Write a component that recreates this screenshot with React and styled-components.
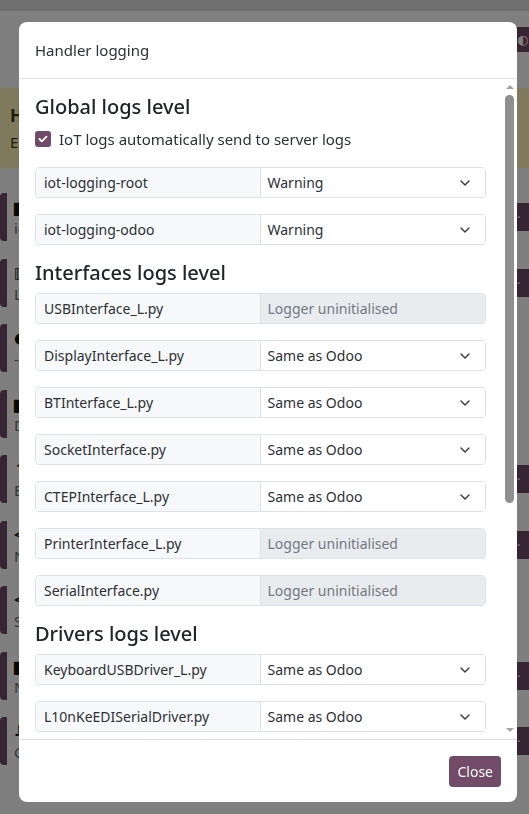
import React from "react";
import styled, { createGlobalStyle } from "styled-components";

const GlobalStyle = createGlobalStyle`
  html, body {
    margin: 0;
    padding: 0;
    height: 100%;
    overflow: hidden;
  }
  body {
    font-family: "Noto Sans", "DejaVu Sans", sans-serif;
    color: #374151;
    background: #ffffff;
  }
`;

/* ---------- page behind the dialog ---------- */

const Page = styled.div`
  display: flex;
  flex-direction: column;
  height: 814px;
`;

const TopBar = styled.div`
  height: 11px;
  background: #dedede;
`;

const PageHead = styled.div`
  height: 77px;
  display: flex;
  justify-content: flex-end;
  align-items: flex-start;
  padding-top: 16px;
  box-sizing: border-box;
`;

const Alert = styled.div`
  height: 80px;
  background: #fff5bd;
  padding: 15px 10px;
  box-sizing: border-box;
  color: #3f3308;
  font-size: 15px;
  line-height: 26px;
`;

const AlertTitle = styled.div`
  font-weight: 700;
  font-size: 17px;
`;

const CardList = styled.div`
  display: flex;
  flex-direction: column;
  gap: 17.5px;
  padding-top: 25px;
`;

const Card = styled.div`
  display: flex;
  align-items: center;
  justify-content: space-between;
  height: 48px;
  border-left: 7px solid #714b67;
  border-radius: 4px;
  padding-left: 7px;
  font-size: 15px;
`;

const CardText = styled.div`
  display: flex;
  flex-direction: column;
  line-height: 22px;
  color: #6b6b6b;
`;

const CardIcon = styled.span`
  color: #111;
  font-weight: 700;
`;

const PurpleButton = styled.div`
  width: 12px;
  height: ${(p) => p.$h || 28}px;
  background: #714b67;
  border-radius: 5px 0 0 5px;
  color: #fff;
  font-size: 13px;
  line-height: ${(p) => p.$h || 28}px;
  padding-left: 4px;
  overflow: hidden;
`;

/* ---------- dialog ---------- */

const Backdrop = styled.div`
  position: fixed;
  inset: 0;
  background: rgba(0, 0, 0, 0.5);
  display: flex;
  align-items: flex-start;
  padding: 22px 0 0 19px;
`;

const Modal = styled.div`
  width: 498px;
  height: 780px;
  background: #fff;
  border-radius: 8px;
  display: flex;
  flex-direction: column;
  overflow: hidden;
`;

const Header = styled.div`
  padding: 16px;
  border-bottom: 1px solid #dee2e6;
  flex-shrink: 0;
`;

const Title = styled.h4`
  margin: 0;
  font-size: 15px;
  font-weight: 400;
  line-height: 24px;
  color: #2d3035;
`;

const BodyWrap = styled.div`
  flex: 1;
  display: flex;
  min-height: 0;
`;

const Body = styled.div`
  flex: 1;
  overflow: hidden;
  padding: 16px 16px 0;
`;

const ScrollBar = styled.div`
  width: 15px;
  flex-shrink: 0;
  display: flex;
  flex-direction: column;
  background: #fff;
`;

const Arrow = styled.div`
  height: 15px;
  display: flex;
  justify-content: center;
  align-items: ${(p) => (p.$down ? "flex-start" : "flex-end")};
  padding: ${(p) => (p.$down ? "4px 0 0" : "0 0 5px")};
  box-sizing: border-box;
  &::before {
    content: "";
    width: 0;
    height: 0;
    border-left: 4px solid transparent;
    border-right: 4px solid transparent;
    ${(p) =>
      p.$down ? "border-top: 4px solid #a3a3a3;" : "border-bottom: 4px solid #a3a3a3;"}
  }
`;

const Track = styled.div`
  flex: 1;
  padding: 1px 3px;
`;

const Thumb = styled.div`
  height: 408px;
  border-radius: 5px;
  background: #8f8f8f;
`;

const SectionTitle = styled.h3`
  margin: 0 0 8px;
  font-size: 20px;
  font-weight: 500;
  line-height: 24px;
  color: #212529;
`;

const CheckRow = styled.label`
  display: flex;
  align-items: center;
  gap: 8px;
  font-size: 15px;
  line-height: 24px;
  color: #2d3035;
  margin-bottom: 16px;
`;

const CheckBox = styled.span`
  width: 16px;
  height: 16px;
  border-radius: 3px;
  background: #714b67;
  display: flex;
  align-items: center;
  justify-content: center;
`;

const Row = styled.div`
  display: grid;
  grid-template-columns: 1fr 1fr;
  height: 31px;
  margin-bottom: 16px;
  border: 1px solid #dee2e6;
  border-radius: 4px;
  box-sizing: border-box;
  font-size: 14px;
  overflow: hidden;
`;

const RowLabel = styled.div`
  background: #f7f8fa;
  border-right: 1px solid #dee2e6;
  padding: 0 8px;
  display: flex;
  align-items: center;
  color: #2d3035;
`;

const Select = styled.div`
  display: flex;
  align-items: center;
  justify-content: space-between;
  padding: 0 15px 0 7px;
  background: ${(p) => (p.$disabled ? "#e9ecef" : "#fff")};
  color: ${(p) => (p.$disabled ? "#73787e" : "#2d3035")};
`;

const Footer = styled.div`
  flex-shrink: 0;
  border-top: 1px solid #dee2e6;
  display: flex;
  justify-content: flex-end;
  padding: 16px 16px 15px;
`;

const CloseButton = styled.button`
  height: 31px;
  padding: 0 8px;
  border: none;
  border-radius: 4px;
  background: #714b67;
  color: #fff;
  font-family: inherit;
  font-size: 14px;
  cursor: pointer;
`;

const Chevron = () => (
  <svg width="10" height="6" viewBox="0 0 10 6">
    <path d="M1 1l4 4 4-4" fill="none" stroke="#343a40" strokeWidth="1.4" strokeLinecap="round" strokeLinejoin="round" />
  </svg>
);

const LevelRow = ({ name, value }) => (
  <Row>
    <RowLabel>{name}</RowLabel>
    {value ? (
      <Select>
        {value}
        <Chevron />
      </Select>
    ) : (
      <Select $disabled>Logger uninitialised</Select>
    )}
  </Row>
);

const interfaces = [
  ["USBInterface_L.py", null],
  ["DisplayInterface_L.py", "Same as Odoo"],
  ["BTInterface_L.py", "Same as Odoo"],
  ["SocketInterface.py", "Same as Odoo"],
  ["CTEPInterface_L.py", "Same as Odoo"],
  ["PrinterInterface_L.py", null],
  ["SerialInterface.py", null],
];

const drivers = [
  ["KeyboardUSBDriver_L.py", "Same as Odoo"],
  ["L10nKeEDISerialDriver.py", "Same as Odoo"],
  ["PrinterDriver_L.py", "Same as Odoo"],
];

const cards = [
  { icon: "▆", text: "iot-box", button: true },
  { icon: "▥", text: "Linux", button: true },
  { icon: "●", text: "-", button: false },
  { icon: "▆", text: "Display", button: false },
  { icon: "↑", text: "Enabled", button: true },
  { icon: "<", text: "Network", button: true },
  { icon: "<", text: "Server", button: false },
  { icon: "▆", text: "Name", button: true },
  { icon: "♪", text: "Connected", button: true },
];

const App = () => {
  return (
    <>
      <GlobalStyle />
      <Page>
        <TopBar />
        <PageHead>
          <PurpleButton $h={25}>◐</PurpleButton>
        </PageHead>
        <Alert>
          <AlertTitle>Handler logging</AlertTitle>
          <div>Enable logs</div>
        </Alert>
        <CardList>
          {cards.map((c, i) => (
            <Card key={i}>
              <CardText>
                <CardIcon>{c.icon}</CardIcon>
                <span>{c.text}</span>
              </CardText>
              {c.button && <PurpleButton>·</PurpleButton>}
            </Card>
          ))}
        </CardList>
      </Page>

      <Backdrop>
        <Modal>
          <Header>
            <Title>Handler logging</Title>
          </Header>
          <BodyWrap>
            <Body>
              <SectionTitle>Global logs level</SectionTitle>
              <CheckRow>
                <CheckBox>
                  <svg width="10" height="8" viewBox="0 0 10 8">
                    <path d="M1.5 4l2.3 2.3L8.5 1.6" fill="none" stroke="#fff" strokeWidth="1.8" strokeLinecap="round" strokeLinejoin="round" />
                  </svg>
                </CheckBox>
                IoT logs automatically send to server logs
              </CheckRow>
              <LevelRow name="iot-logging-root" value="Warning" />
              <LevelRow name="iot-logging-odoo" value="Warning" />

              <SectionTitle>Interfaces logs level</SectionTitle>
              {interfaces.map(([n, v]) => (
                <LevelRow key={n} name={n} value={v} />
              ))}

              <SectionTitle>Drivers logs level</SectionTitle>
              {drivers.map(([n, v]) => (
                <LevelRow key={n} name={n} value={v} />
              ))}
            </Body>
            <ScrollBar>
              <Arrow />
              <Track>
                <Thumb />
              </Track>
              <Arrow $down />
            </ScrollBar>
          </BodyWrap>
          <Footer>
            <CloseButton>Close</CloseButton>
          </Footer>
        </Modal>
      </Backdrop>
    </>
  );
};

export default App;
